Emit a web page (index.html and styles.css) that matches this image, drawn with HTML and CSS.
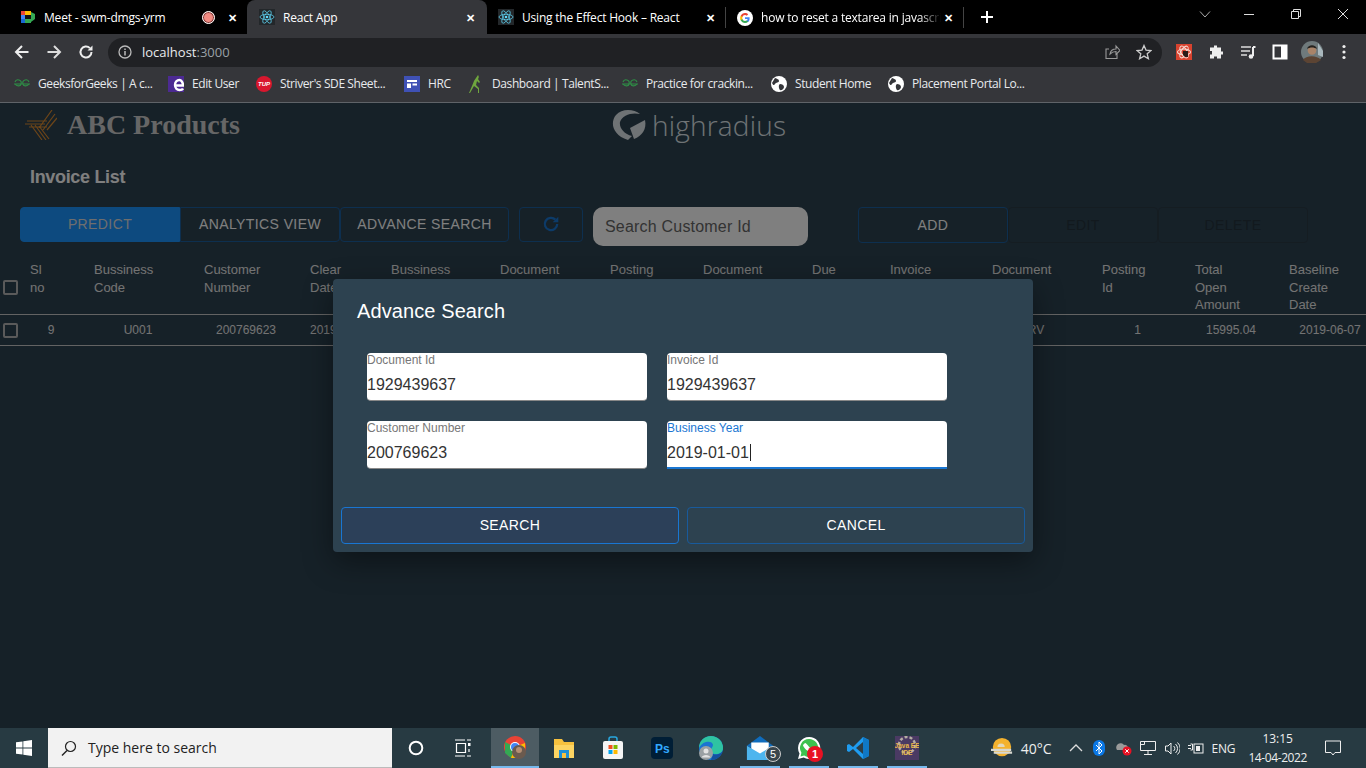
FILE: index.html
```html
<!DOCTYPE html>
<html lang="en">
  <head>
    <meta charset="UTF-8" />
    <meta name="viewport" content="width=device-width, initial-scale=1.0" />
    <title>React App</title>
    <link rel="stylesheet" href="styles.css">
  </head>
  <body>
    <!-- browser tabs -->
    <div class="tabstrip">
      <div class="tab tab-meet">
        <svg class="fav" viewBox="0 0 16 16"><rect x="1" y="2" width="4" height="4" fill="#ea4335"/><rect x="5" y="2" width="6" height="4" fill="#fbbc04"/><rect x="1" y="6" width="4" height="4" fill="#4285f4"/><rect x="1" y="10" width="4" height="4" fill="#1967d2"/><rect x="5" y="10" width="6" height="4" fill="#34a853"/><path d="M11 3v10l4-3V5z" fill="#34a853"/><rect x="5" y="6" width="6" height="4" fill="#111"/></svg>
        <span class="tab-title">Meet - swm-dmgs-yrm</span>
        <span class="rec"></span>
        <span class="tab-x">✕</span>
      </div>
      <div class="tab tab-active">
        <svg class="fav fav-box" viewBox="0 0 16 16"><use href="#react"/></svg>
        <span class="tab-title">React App</span>
        <span class="tab-x">✕</span>
      </div>
      <div class="tab tab-react">
        <svg class="fav fav-box" viewBox="0 0 16 16"><use href="#react"/></svg>
        <span class="tab-title">Using the Effect Hook – React</span>
        <span class="tab-x">✕</span>
      </div>
      <div class="tab tab-google">
        <svg class="fav" viewBox="0 0 16 16"><circle cx="8" cy="8" r="8" fill="#fff"/><path d="M12.6 8.2c0-.4 0-.7-.1-1H8v1.9h2.6c-.1.7-.5 1.200-1 1.600v1.300h1.600c1-.9 1.400-2.200 1.400-3.800z" fill="#4285f4"/><path d="M8 13c1.300 0 2.400-.4 3.200-1.200l-1.600-1.300c-.4.300-1 .5-1.600.5-1.200 0-2.300-.8-2.600-2H3.700v1.300C4.500 11.900 6.100 13 8 13z" fill="#34a853"/><path d="M5.400 9c-.2-.6-.2-1.300 0-1.900V5.800H3.700c-.7 1.400-.7 3 0 4.500z" fill="#fbbc04"/><path d="M8 5c.7 0 1.300.2 1.800.7l1.400-1.400C10.400 3.500 9.300 3 8 3 6.100 3 4.500 4.100 3.700 5.800l1.700 1.300C5.700 5.900 6.800 5 8 5z" fill="#ea4335"/></svg>
        <span class="tab-title tab-fade">how to reset a textarea in javascri</span>
        <span class="tab-x">✕</span>
      </div>
      <svg class="newtab" viewBox="0 0 14 14"><path d="M7 1v12M1 7h12" stroke="#fff" stroke-width="2"/></svg>
      <div class="winctl">
        <svg viewBox="0 0 12 12" class="winchev"><path d="M1 3.500l5 5.500 5-5.500" fill="none" stroke="#aaa"/></svg>
        <svg viewBox="0 0 12 12" class="winbtn"><path d="M1 6.500h10" stroke="#ddd"/></svg>
        <svg viewBox="0 0 12 12" class="winbtn"><path d="M1.500 3.500h7v7h-7zM3.500 3.500v-2h7v7h-2" fill="none" stroke="#ddd"/></svg>
        <svg viewBox="0 0 12 12" class="winbtn"><path d="M1 1l10 10M11 1L1 11" stroke="#ddd"/></svg>
      </div>
    </div>

    <!-- address bar -->
    <div class="toolbar">
      <svg class="nav" viewBox="0 0 16 16"><path d="M14.500 8H2M8 2L2 8l6 6" fill="none" stroke="#eee" stroke-width="2"/></svg>
      <svg class="nav" viewBox="0 0 16 16"><path d="M1.500 8H14M8 2l6 6-6 6" fill="none" stroke="#ddd" stroke-width="2"/></svg>
      <svg class="nav" viewBox="0 0 16 16"><path d="M13.500 8a5.500 5.500 0 1 1-1.600-3.900" fill="none" stroke="#eee" stroke-width="2"/><path d="M14.500 1.500v5h-5z" fill="#eee"/></svg>
      <div class="omnibox">
        <svg class="info" viewBox="0 0 14 14"><circle cx="7" cy="7" r="6" fill="none" stroke="#bbb" stroke-width="1.300"/><path d="M7 6v4.500M7 3.500v1.500" stroke="#bbb" stroke-width="1.500"/></svg>
        <span class="host">localhost<span class="port">:3000</span></span>
        <svg class="omni-share" viewBox="0 0 16 16"><path d="M13 9.500v5H2V5h3M6 10c.5-3 3-5 6-5V2l4 4.500-4 4V7.500c-2.500 0-4.500 1-6 2.500z" fill="none" stroke="#999" stroke-width="1.100"/></svg>
        <svg class="omni-star" viewBox="0 0 16 16"><path d="M8 1.500l2 4.600 5 .4-3.800 3.300 1.200 4.900L8 12.100l-4.400 2.600 1.200-4.900L1 6.500l5-.4z" fill="none" stroke="#ccc" stroke-width="1.300"/></svg>
      </div>
      <div class="ext-icons">
        <svg class="ext" viewBox="0 0 16 16"><rect width="16" height="16" fill="#d8432f"/><g fill="none" stroke="#f7d9d2" stroke-width="1.100"><ellipse cx="8" cy="8" rx="6.500" ry="3"/><ellipse cx="8" cy="8" rx="6.500" ry="3" transform="rotate(60 8 8)"/><ellipse cx="8" cy="8" rx="6.500" ry="3" transform="rotate(120 8 8)"/></g><path d="M7 7h5v6H9l-2-2z" fill="#2a1b18"/></svg>
        <svg class="ext" viewBox="0 0 16 16"><path d="M6 1.500h3v2h4v4h2v3h-2v4H9v-2H6v2H2v-4h2V7H2V3.500h4z" fill="#eee"/></svg>
        <svg class="ext" viewBox="0 0 16 16"><path d="M1 3h10M1 7h9M1 11h6" stroke="#ddd" stroke-width="1.500"/><path d="M13 3v9" stroke="#eee" stroke-width="2"/><circle cx="11" cy="12.500" r="2.300" fill="#eee"/><path d="M13 3h2.500" stroke="#eee" stroke-width="2"/></svg>
        <svg class="ext" viewBox="0 0 16 16"><rect x="1.500" y="1.500" width="13" height="13" fill="none" stroke="#fff" stroke-width="2"/><rect x="9" y="1.500" width="5.500" height="13" fill="#fff"/></svg>
        <svg class="avatar" viewBox="0 0 22 22"><circle cx="11" cy="11" r="11" fill="#6f7a7c"/><path d="M17 2l5 8v6l-5-2z" fill="#a9b8bd"/><path d="M2 19c3-5 14-5 18 0l-5 3H6z" fill="#5c4433"/><circle cx="11" cy="9.500" r="4.300" fill="#a98469"/><path d="M6 8c1-5 9-5 10 0-3-2-7-2-10 0z" fill="#26221e"/></svg>
        <svg class="kebab" viewBox="0 0 4 16"><circle cx="2" cy="2.500" r="1.600" fill="#eee"/><circle cx="2" cy="8" r="1.600" fill="#eee"/><circle cx="2" cy="13.500" r="1.600" fill="#eee"/></svg>
      </div>
    </div>

    <!-- bookmarks -->
    <div class="bookmarks">
      <span class="bm bm-1"><svg class="bm-ico" viewBox="0 0 16 16"><use href="#gfg"/></svg>GeeksforGeeks | A c...</span>
      <span class="bm bm-2"><svg class="bm-ico" viewBox="0 0 16 16"><rect width="16" height="16" fill="#4c2a92"/><path d="M7 9.500h8C15 6 13 4 11.500 4 9 4 7 6 7 9c0 3 2 5 4.500 5 1.500 0 3-.5 3.500-1.500" fill="none" stroke="#fff" stroke-width="2.400"/></svg>Edit User</span>
      <span class="bm bm-3"><svg class="bm-ico" viewBox="0 0 16 16"><circle cx="8" cy="8" r="8" fill="#d8172e"/><text x="8" y="10" class="tup-text">TUP</text></svg>Striver's SDE Sheet...</span>
      <span class="bm bm-4"><svg class="bm-ico" viewBox="0 0 16 16"><rect width="16" height="16" fill="#3f51b5"/><rect x="3" y="4" width="10" height="2" fill="#fff"/><rect x="3" y="7.500" width="4" height="4.500" fill="#fff"/><rect x="8.500" y="7.500" width="4.500" height="2" fill="#fff"/></svg>HRC</span>
      <span class="bm bm-5"><svg class="bm-ico bm-run" viewBox="0 0 16 18"><path d="M10 0c1 1 1 3 0 4l2 3-1 1-2-2-1 4 3 3v5h-1v-4L6 11l-4 7H1l3-7 2-5c1-2 2-3 4-6z" fill="#6fa63e"/></svg>Dashboard | TalentS...</span>
      <span class="bm bm-6"><svg class="bm-ico" viewBox="0 0 16 16"><use href="#gfg"/></svg>Practice for crackin...</span>
      <span class="bm bm-7"><svg class="bm-ico" viewBox="0 0 16 16"><use href="#globe"/></svg>Student Home</span>
      <span class="bm bm-8"><svg class="bm-ico" viewBox="0 0 16 16"><use href="#globe"/></svg>Placement Portal Lo...</span>
    </div>

    <!-- the app, dimmed by the dialog backdrop -->
    <main class="app">
      <header class="brand">
        <div class="brand-left">
          <svg class="abc-logo" viewBox="0 0 32 30"><path d="M0 14h20M2 11h20M4 17h18M27 0L14 18M30 4L18 20M32 8L22 20M6 15l11 15M10 15l11 15M14 16l10 13" fill="none" stroke="#d98a30" stroke-width="1.200"/></svg>
          <span class="abc-name">ABC Products</span>
        </div>
        <div class="brand-center">
          <svg class="hr-logo" viewBox="0 0 36 32"><path d="M28 5C22 0 10-1 4 6-2 13 0 26 16 31l4-4C12 25 7 19 8 13c2-7 12-10 20-8z" fill="#dfe6ea"/><path d="M18 19l15-8c2 9-3 16-11 19z" fill="#dfe6ea"/></svg>
          <span class="hr-name">highradius</span>
        </div>
      </header>

      <h1 class="page-title">Invoice List</h1>

      <div class="actions">
        <div class="btn-group">
          <button class="btn btn-predict">PREDICT</button>
          <button class="btn btn-analytics">ANALYTICS VIEW</button>
          <button class="btn btn-advance">ADVANCE SEARCH</button>
        </div>
        <button class="btn btn-refresh">
          <svg viewBox="0 0 16 16"><path d="M13.500 8a5.500 5.500 0 1 1-1.600-3.900" fill="none" stroke="#1976d2" stroke-width="2"/><path d="M14.500 1.500v5h-5z" fill="#1976d2"/></svg>
        </button>
        <div class="search-box">Search Customer Id</div>
        <div class="btn-group crud">
          <button class="btn btn-crud btn-add">ADD</button>
          <button class="btn btn-crud btn-off">EDIT</button>
          <button class="btn btn-crud btn-off">DELETE</button>
        </div>
      </div>

      <div class="grid-head">
        <div class="cell-check"><span class="checkbox"></span></div>
        <div class="th">Sl<br>no</div>
        <div class="th">Bussiness<br>Code</div>
        <div class="th">Customer<br>Number</div>
        <div class="th">Clear<br>Date</div>
        <div class="th">Bussiness<br>Year</div>
        <div class="th">Document<br>Id</div>
        <div class="th">Posting<br>Date</div>
        <div class="th">Document<br>Create<br>Date</div>
        <div class="th">Due<br>Date</div>
        <div class="th">Invoice<br>Currency</div>
        <div class="th">Document<br>Type</div>
        <div class="th">Posting<br>Id</div>
        <div class="th">Total<br>Open<br>Amount</div>
        <div class="th">Baseline<br>Create<br>Date</div>
      </div>
      <div class="grid-row">
        <div class="cell-check"><span class="checkbox"></span></div>
        <div class="td">9</div>
        <div class="td">U001</div>
        <div class="td">200769623</div>
        <div class="td">2019-06-21</div>
        <div class="td">2019</div>
        <div class="td">1929439637</div>
        <div class="td">2019-06-07</div>
        <div class="td">2019-06-07</div>
        <div class="td">2019-06-22</div>
        <div class="td">USD</div>
        <div class="td">RV</div>
        <div class="td">1</div>
        <div class="td">15995.04</div>
        <div class="td td-last">2019-06-07</div>
      </div>
    </main>

    <div class="backdrop"></div>

    <section class="dialog">
      <h2 class="dialog-title">Advance Search</h2>
      <div class="fields">
        <div class="field"><label>Document Id</label><span class="val">1929439637</span></div>
        <div class="field"><label>Invoice Id</label><span class="val">1929439637</span></div>
        <div class="field"><label>Customer Number</label><span class="val">200769623</span></div>
        <div class="field field-focus"><label>Business Year</label><span class="val">2019-01-01<i class="caret"></i></span></div>
      </div>
      <div class="dialog-actions">
        <button class="dlg-btn dlg-search">SEARCH</button>
        <button class="dlg-btn">CANCEL</button>
      </div>
    </section>

    <!-- windows taskbar -->
    <footer class="taskbar">
      <svg class="start" viewBox="0 0 16 16"><path d="M0 2.300l6.500-.9v6.200H0zM7.300 1.300L16 0v7.600H7.300zM0 8.400h6.500v6.200L0 13.700zM7.300 8.400H16V16l-8.700-1.300z" fill="#fff"/></svg>
      <div class="searchbar">
        <svg class="lens" viewBox="0 0 16 16"><circle cx="9.500" cy="6.500" r="5" fill="none" stroke="#222" stroke-width="1.200"/><path d="M6 10.500L1 15.500" stroke="#222" stroke-width="1.400"/></svg>
        <span>Type here to search</span>
      </div>
      <svg class="tb-cortana" viewBox="0 0 16 16"><circle cx="8" cy="8" r="6.300" fill="none" stroke="#fff" stroke-width="2"/></svg>
      <svg class="tb-view" viewBox="0 0 18 20"><path d="M1 2h10M1 18h10M13 2h4M13 18h4M2.500 5.500h9v9h-9z" fill="none" stroke="#fff" stroke-width="1.200"/><rect x="14" y="5" width="2.500" height="3" fill="#fff"/><path d="M15 11v3" stroke="#fff" stroke-width="1.200"/></svg>
      <div class="tb-app tb-chrome">
        <svg viewBox="0 0 24 24"><circle cx="12" cy="12" r="11" fill="#ea4335"/><path d="M12 12L2 7v11l6 5z" fill="#34a853"/><path d="M12 12l10-4v6l-6 9H8z" fill="#fbbc04"/><circle cx="12" cy="12" r="5" fill="#fff"/><circle cx="12" cy="12" r="4" fill="#4285f4"/><circle cx="16" cy="17" r="7" fill="#6b5a4e"/><circle cx="16" cy="15" r="3" fill="#b58f73"/></svg>
      </div>
      <div class="tb-app">
        <svg viewBox="0 0 24 24"><path d="M2 3h8l2 3h10v16H2z" fill="#f7c13e"/><rect x="2" y="9" width="20" height="13" fill="#fcd462"/><rect x="7" y="14" width="10" height="8" fill="#1b8fd6"/><rect x="10" y="17" width="4" height="5" fill="#f7c13e"/></svg>
      </div>
      <div class="tb-app">
        <svg viewBox="0 0 24 24"><path d="M8 6V3a2 2 0 0 1 2-2h4a2 2 0 0 1 2 2v3" fill="none" stroke="#29a8e0" stroke-width="1.500"/><rect x="2" y="5" width="20" height="18" rx="2" fill="#f5f5f5"/><rect x="7.500" y="9" width="4" height="4" fill="#f25022"/><rect x="12.500" y="9" width="4" height="4" fill="#7fba00"/><rect x="7.500" y="14" width="4" height="4" fill="#00a4ef"/><rect x="12.500" y="14" width="4" height="4" fill="#ffb900"/></svg>
      </div>
      <div class="tb-app">
        <svg viewBox="0 0 24 24"><rect x="1" y="1" width="22" height="22" rx="4" fill="#001e36"/><text x="5" y="17" class="ps-text">Ps</text></svg>
      </div>
      <div class="tb-app">
        <svg class="tb-edge" viewBox="0 0 26 26"><circle cx="13" cy="13" r="12" fill="#1b74d1"/><path d="M13 1a12 12 0 0 1 12 12c0 4-3 6-7 6-4 0-5-2-5-4 0-2 2-3 2-5 0-3-4-4-7-3-4 1-6 4-7 6 0-7 5-12 12-12z" fill="#2fc3a2"/><path d="M25 15c-1 6-6 10-12 10l2-6c2 1 8 1 10-4z" fill="#1450a0"/><circle cx="8" cy="18" r="7" fill="#9aa0a3"/><circle cx="8" cy="16" r="2.500" fill="#e2e2e2"/><path d="M3.500 22.500c1-3.500 8-3.500 9 0z" fill="#e2e2e2"/></svg>
      </div>
      <div class="tb-app tb-run">
        <svg class="tb-mail" viewBox="0 0 26 22"><path d="M1 9l12-9 12 9-12 6z" fill="#0f6cbd"/><path d="M5 6h16v9l-8 4-8-4z" fill="#fff"/><path d="M1 9l12 7 12-7v13H1z" fill="#4db5ee"/></svg>
        <span class="badge badge-dark">5</span>
      </div>
      <div class="tb-app tb-run">
        <svg viewBox="0 0 24 24"><path d="M12 1a11 11 0 0 0-9.500 16.500L1 23l5.700-1.500A11 11 0 1 0 12 1z" fill="#fff"/><path d="M12 3a9 9 0 0 0-7.600 13.800L3.500 20.500l3.700-1A9 9 0 1 0 12 3z" fill="#3ec14f"/><path d="M8 7c2 0 5 6 8 8l-2 2c-3-1-8-6-8-8z" fill="#fff"/></svg>
        <span class="badge badge-red">1</span>
      </div>
      <div class="tb-app tb-run">
        <svg viewBox="0 0 24 24"><path d="M17 1l6 3v16l-6 3L7 13l-4 3-2-1V9l2-1 4 3z" fill="#1f9cf0"/><path d="M17 6v12l-7-6z" fill="#2c3e47"/><path d="M17 1l6 3v16l-6 3z" fill="#0f78c6"/></svg>
      </div>
      <div class="tb-app tb-run">
        <svg viewBox="0 0 24 24"><rect x="0" y="0" width="24" height="24" fill="#4a3a63"/><circle cx="12" cy="9" r="8" fill="none" stroke="#b5aea2" stroke-width="2.500" stroke-dasharray="3 2"/><text x="12" y="12" class="je-text">Java EE</text><text x="12" y="19" class="je-text">IDE</text></svg>
      </div>
      <div class="tray">
        <svg class="weather" viewBox="0 0 24 24"><circle cx="12" cy="11" r="10" fill="#f4b22e"/><path d="M0 14h22M3 17h20" stroke="#d8d8d0" stroke-width="2.500"/><path d="M7 11a4 4 0 0 1 8 0z" fill="#e2d8bd"/></svg>
        <span class="temp">40°C</span>
        <svg class="tray-chev" viewBox="0 0 14 14"><path d="M1 10l6-6 6 6" fill="none" stroke="#ddd" stroke-width="1.300"/></svg>
        <svg class="tray-ico tray-bt" viewBox="0 0 12 16"><rect x="0" y="0" width="12" height="16" rx="6" fill="#0a78e6"/><path d="M3 5l6 6-3 3V2l3 3-6 6" fill="none" stroke="#fff"/></svg>
        <svg class="tray-ico" viewBox="0 0 16 16"><path d="M1 10a4 4 0 0 1 7-5 3 3 0 0 1 3 5z" fill="#9a9a9a"/><circle cx="11" cy="11" r="4.500" fill="#e81123"/><path d="M9.300 9.300l3.400 3.400M12.700 9.300l-3.400 3.400" stroke="#fff"/></svg>
        <svg class="tray-ico" viewBox="0 0 16 16"><path d="M.5 1.500h15v9H.5zM8 10.500v4M4 14.500h8M.5 4.500h4v-3" fill="none" stroke="#eee"/></svg>
        <svg class="tray-ico" viewBox="0 0 16 16"><path d="M1.500 6h2.500l3-3v11l-3-3H1.500zM9.500 6a3 3 0 0 1 0 5M11.500 4a6 6 0 0 1 0 9M13.500 2.500a8 8 0 0 1 0 12" fill="none" stroke="#eee"/></svg>
        <svg class="tray-ico" viewBox="0 0 16 16"><rect x="6" y="4" width="9" height="9" fill="none" stroke="#eee"/><rect x="8" y="6" width="4" height="5" fill="#eee"/><path d="M0 5.500h3M0 8.500h3M2.500 4h2v6h-2" fill="none" stroke="#eee"/></svg>
        <span class="lang">ENG</span>
        <div class="clock"><span>13:15</span><span class="clock-date">14-04-2022</span></div>
        <svg class="notif" viewBox="0 0 16 16"><path d="M.5 1h15v11.500H10L8 15l-2-2.500H.5z" fill="none" stroke="#eee"/></svg>
      </div>
    </footer>

    <!-- shared icons -->
    <svg class="defs" aria-hidden="true">
      <defs>
        <g id="react" fill="none" stroke="#61dafb" stroke-width=".7"><ellipse cx="8" cy="8" rx="7" ry="2.700"/><ellipse cx="8" cy="8" rx="7" ry="2.700" transform="rotate(60 8 8)"/><ellipse cx="8" cy="8" rx="7" ry="2.700" transform="rotate(120 8 8)"/><circle cx="8" cy="8" r="1.300" fill="#61dafb" stroke="none"/></g>
        <g id="gfg" fill="none" stroke="#2f8d46" stroke-width="1.100"><path d="M0 8h16M1 6a3 3 0 0 1 6 2c0 2-4 3-6 0M15 6a3 3 0 0 0-6 2c0 2 4 3 6 0"/></g>
        <g id="globe"><circle cx="8" cy="8" r="8" fill="#fff"/><path d="M4 2c2 1 4 1 4 3S5 6 4 8 2 9 1 7zM9 8c2 0 4 1 4 3s-3 4-4 3-2-5 0-6z" fill="#35363a"/></g>
      </defs>
    </svg>
  </body>
</html>
```

FILE: styles.css
```css
* {
  box-sizing: border-box;
}
html,
body {
  margin: 0;
  height: 768px;
  overflow: hidden;
}
body {
  position: relative;
  display: flex;
  flex-direction: column;
  background: #2d4250;
  font-family: "Liberation Sans", Arial, sans-serif;
}
button {
  font-family: inherit;
  cursor: pointer;
}
.defs {
  position: absolute;
  width: 0;
  height: 0;
}

/* browser chrome */
.tabstrip {
  display: flex;
  align-items: stretch;
  height: 34px;
  background: #000;
  color: #fff;
  font-family: "Open Sans", sans-serif;
  font-size: 12px;
  letter-spacing: -0.2px;
}
.tab {
  display: flex;
  align-items: center;
  padding-right: 8px;
}
.tab-meet {
  width: 247px;
  padding-left: 20px;
}
.tab-active {
  width: 240px;
  background: #35363a;
  border-radius: 8px 8px 0 0;
  padding: 0 10px 0 12px;
}
.tab-react {
  width: 238px;
  padding-left: 11px;
}
.tab-google {
  width: 239px;
  padding-left: 11px;
  border-left: 1px solid #444;
  border-right: 1px solid #444;
  margin: 7px 0 6px;
}
.fav {
  width: 16px;
  height: 16px;
  flex: none;
  margin-right: 8px;
}
.fav-box {
  background: #23272a;
}
.tab-title {
  flex: 1;
  min-width: 0;
  white-space: nowrap;
  overflow: hidden;
}
.tab-fade {
  -webkit-mask-image: linear-gradient(to right, #000 88%, transparent);
  mask-image: linear-gradient(to right, #000 88%, transparent);
}
.rec {
  width: 13px;
  height: 13px;
  margin-right: 10px;
  border-radius: 50%;
  background: #f28b82;
  border: 1px solid #fff;
  box-shadow: inset 0 0 0 1px #7e3b38;
}
.tab-x {
  flex: none;
  width: 14px;
  font-size: 11px;
  font-weight: bold;
  text-align: center;
}
.newtab {
  width: 14px;
  height: 14px;
  margin: 10px 0 0 16px;
}
.winctl {
  display: flex;
  margin-left: auto;
  padding: 8px 17px 0 0;
  gap: 35px;
}
.winctl svg {
  width: 12px;
  height: 12px;
}
.winchev {
  margin-right: -3px;
}

.toolbar {
  display: flex;
  align-items: center;
  height: 36px;
  padding: 0 0 0 14px;
  background: #35363a;
}
.nav {
  width: 16px;
  height: 16px;
  margin-right: 16px;
  flex: none;
}
.omnibox {
  display: flex;
  align-items: center;
  width: 1054px;
  height: 29px;
  margin: 0 0 0 -2px;
  padding: 0 10px;
  border-radius: 15px;
  background: #202124;
  font-family: "Open Sans", sans-serif;
  font-size: 13px;
  color: #e8eaed;
}
.info {
  width: 14px;
  height: 14px;
  margin-right: 10px;
}
.port {
  color: #9aa0a6;
}
.omni-share {
  width: 16px;
  height: 16px;
  margin-left: auto;
}
.omni-star {
  width: 16px;
  height: 16px;
  margin: 0 0 0 16px;
}
.ext-icons {
  display: flex;
  align-items: center;
  margin-left: 14px;
}
.ext {
  width: 16px;
  height: 16px;
  margin-right: 16px;
}
.avatar {
  width: 22px;
  height: 22px;
  margin: 0 19px 0 -3px;
}
.kebab {
  width: 4px;
  height: 16px;
}

.bookmarks {
  display: flex;
  align-items: center;
  height: 33px;
  padding: 0 0 5px 14px;
  background: #35363a;
  border-bottom: 1px solid #5f6368;
  color: #e8eaed;
  font-family: "Open Sans", sans-serif;
  font-size: 12px;
  letter-spacing: -0.4px;
}
.bm {
  display: flex;
  align-items: center;
  white-space: nowrap;
}
.bm-ico {
  width: 16px;
  height: 16px;
  margin-right: 8px;
}
.bm-run {
  height: 18px;
}
.bm-1 {
  width: 154px;
}
.bm-2 {
  width: 88px;
}
.bm-3 {
  width: 148px;
}
.bm-4 {
  width: 64px;
}
.bm-5 {
  width: 154px;
}
.bm-6 {
  width: 149px;
}
.bm-7 {
  width: 117px;
}
.tup-text {
  font-family: "Liberation Sans", sans-serif;
  font-size: 6px;
  font-weight: bold;
  font-style: italic;
  fill: #fff;
  text-anchor: middle;
  letter-spacing: 0;
}

/* invoice app */
.app {
  flex: 1;
  color: #fff;
}
.brand {
  display: flex;
  height: 40px;
  padding: 3px 0 0 25px;
  align-items: center;
}
.brand-left {
  display: flex;
  align-items: center;
}
.abc-logo {
  width: 32px;
  height: 30px;
  margin-right: 10px;
}
.abc-name {
  font-family: "Liberation Serif", serif;
  font-size: 28px;
  font-weight: bold;
  color: #ccc;
}
.brand-center {
  display: flex;
  align-items: center;
  margin-left: 372px;
}
.hr-logo {
  width: 36px;
  height: 32px;
}
.hr-name {
  font-family: "Open Sans", sans-serif;
  font-size: 28px;
  font-weight: 300;
  letter-spacing: 0.2px;
  color: #dfe6ea;
  margin-left: 4px;
}
.page-title {
  margin: 22px 0 0 30px;
  height: 42px;
  font-size: 18px;
  line-height: 24px;
  font-weight: bold;
  letter-spacing: -0.33px;
  color: #fff;
}
.actions {
  display: flex;
  align-items: flex-start;
  padding-left: 20px;
}
.btn-group {
  display: flex;
}
.btn {
  height: 35px;
  padding: 0 0 2px;
  border: 1px solid #1b5e9f;
  border-radius: 4px;
  background: transparent;
  color: #fff;
  font-size: 14px;
  letter-spacing: 0.4px;
}
.btn-predict {
  width: 160px;
  background: #1a94ff;
  border-color: #1a94ff;
  border-radius: 4px 0 0 4px;
  color: #ddd;
}
.btn-analytics {
  width: 160px;
  border-radius: 0 4px 4px 0;
}
.btn-advance {
  width: 169px;
}
.btn-refresh {
  display: flex;
  align-items: center;
  justify-content: center;
  width: 64px;
  margin-left: 10px;
}
.btn-refresh svg {
  width: 18px;
  height: 18px;
}
.search-box {
  width: 215px;
  height: 39px;
  margin-left: 10px;
  padding: 11px 12px 0;
  border-radius: 10px;
  background: #fff;
  color: #666;
  font-size: 16px;
  letter-spacing: 0.2px;
}
.crud {
  margin-left: 50px;
}
.btn-crud {
  width: 150px;
  height: 36px;
  padding: 0;
}
.btn-off {
  border-color: #2a3a45;
  color: #24323c;
}
.grid-head,
.grid-row {
  display: grid;
  grid-template-columns: 30px 64px 110px 106px 81px 109px 110px 93px 109px 78px 102px 110px 93px 94px 77px;
  border-bottom: 1px solid #c6c6c6;
}
.grid-head {
  height: 55px;
  margin-top: 14px;
  padding-top: 1px;
}
.grid-row {
  height: 31px;
  align-items: center;
}
.cell-check {
  display: flex;
  align-self: center;
  padding-left: 3px;
}
.checkbox {
  width: 15px;
  height: 15px;
  border: 2px solid #b4b4b4;
  border-radius: 2px;
}
.th {
  font-size: 13px;
  line-height: 17.5px;
  color: #e6e6e6;
}
.td {
  padding-right: 22px;
  text-align: center;
  font-size: 12px;
  color: #e6e6e6;
  white-space: nowrap;
}
.td-last {
  padding: 0 0 0 5px;
}

/* dialog */
.backdrop {
  position: absolute;
  inset: 103px 0 40px;
  background: rgba(0, 0, 0, 0.5);
}
.dialog {
  position: absolute;
  left: 333px;
  top: 279px;
  width: 700px;
  height: 273px;
  padding: 20px 8px 0;
  border-radius: 4px;
  background: #2d4250;
  box-shadow: 0 10px 30px rgba(0, 0, 0, 0.4);
}
.dialog-title {
  margin: 0 0 0 16px;
  font-size: 20px;
  line-height: 24px;
  font-weight: normal;
  letter-spacing: 0.1px;
  color: #fff;
}
.fields {
  display: grid;
  grid-template-columns: 280px 280px;
  gap: 20px;
  margin: 30px 0 0 26px;
}
.field {
  display: flex;
  flex-direction: column;
  height: 48px;
  background: #fff;
  border-radius: 4px;
  border-bottom: 1px solid #888;
}
.field label {
  font-size: 12px;
  line-height: 14px;
  color: #777;
}
.val {
  margin-top: 8px;
  font-size: 16px;
  line-height: 20px;
  color: #333;
}
.field-focus {
  border-radius: 4px 4px 0 0;
  border-bottom: 2px solid #1976d2;
}
.field-focus label {
  color: #1976d2;
}
.caret {
  display: inline-block;
  width: 1px;
  height: 17px;
  margin-left: 1px;
  vertical-align: -3px;
  background: #222;
}
.dialog-actions {
  display: flex;
  gap: 8px;
  margin-top: 38px;
}
.dlg-btn {
  flex: 1;
  height: 37px;
  padding: 0 0 1px;
  border: 1px solid #185a9c;
  border-radius: 4px;
  background: transparent;
  color: #fff;
  font-size: 14px;
  letter-spacing: 0.4px;
}
.dlg-search {
  border-color: #1976d2;
  background: #2c4059;
}

/* taskbar */
.taskbar {
  display: flex;
  align-items: center;
  flex: none;
  height: 40px;
  background: #273a42;
  color: #fff;
}
.start {
  width: 16px;
  height: 16px;
  margin: 0 16px;
  flex: none;
}
.searchbar {
  display: flex;
  align-items: center;
  width: 344px;
  height: 40px;
  padding-left: 13px;
  background: #f2f2f2;
  border-bottom: 1px solid #bbb;
  color: #222;
  font-family: "Open Sans", sans-serif;
  font-size: 14px;
}
.lens {
  width: 16px;
  height: 16px;
  margin-right: 11px;
}
.tb-cortana {
  width: 16px;
  height: 16px;
  margin: 0 0 0 16px;
}
.tb-view {
  width: 18px;
  height: 20px;
  margin: 0 19px 0 30px;
}
.tb-app {
  position: relative;
  display: flex;
  align-items: center;
  justify-content: center;
  width: 48px;
  height: 40px;
  margin-right: 1px;
}
.tb-app svg {
  width: 24px;
  height: 24px;
}
.tb-app .tb-mail {
  width: 30px;
  height: 24px;
}
.tb-app .tb-edge {
  width: 26px;
  height: 26px;
}
.tb-chrome {
  background: #4d5c63;
  border-bottom: 2px solid #76b9ed;
}
.tb-run::after {
  content: "";
  position: absolute;
  left: 4px;
  right: 4px;
  bottom: 0;
  height: 2px;
  background: #76b9ed;
}
.ps-text {
  font-family: "Liberation Sans", sans-serif;
  font-size: 12px;
  font-weight: bold;
  fill: #31a8ff;
}
.je-text {
  font-family: "Liberation Sans", sans-serif;
  font-size: 6.500px;
  font-weight: bold;
  fill: #e8b84a;
  text-anchor: middle;
}
.badge {
  position: absolute;
  display: flex;
  align-items: center;
  justify-content: center;
  width: 16px;
  height: 16px;
  top: 18px;
  border-radius: 50%;
  font-size: 11px;
}
.badge-dark {
  left: 29px;
  background: #39464d;
  border: 1px solid #ccc;
}
.badge-red {
  left: 22px;
  background: #e81123;
  font-weight: bold;
}
.tray {
  display: flex;
  align-items: center;
  margin-left: auto;
  font-family: "Open Sans", sans-serif;
  font-size: 12px;
  color: #eee;
}
.weather {
  width: 22px;
  height: 24px;
}
.temp {
  margin: 0 17px 0 8px;
  font-size: 14px;
}
.tray-chev {
  width: 14px;
  height: 14px;
  margin-right: 10px;
}
.tray-ico {
  width: 16px;
  height: 16px;
  margin-right: 8px;
}
.tray-bt {
  width: 12px;
  margin-right: 11px;
}
.lang {
  margin: 0 13px 0 0;
  letter-spacing: -0.2px;
}
.clock {
  display: flex;
  flex-direction: column;
  align-items: center;
  line-height: 19px;
}
.clock-date {
  letter-spacing: -0.4px;
}
.notif {
  width: 16px;
  height: 16px;
  margin: 0 25px 0 18px;
}
```
